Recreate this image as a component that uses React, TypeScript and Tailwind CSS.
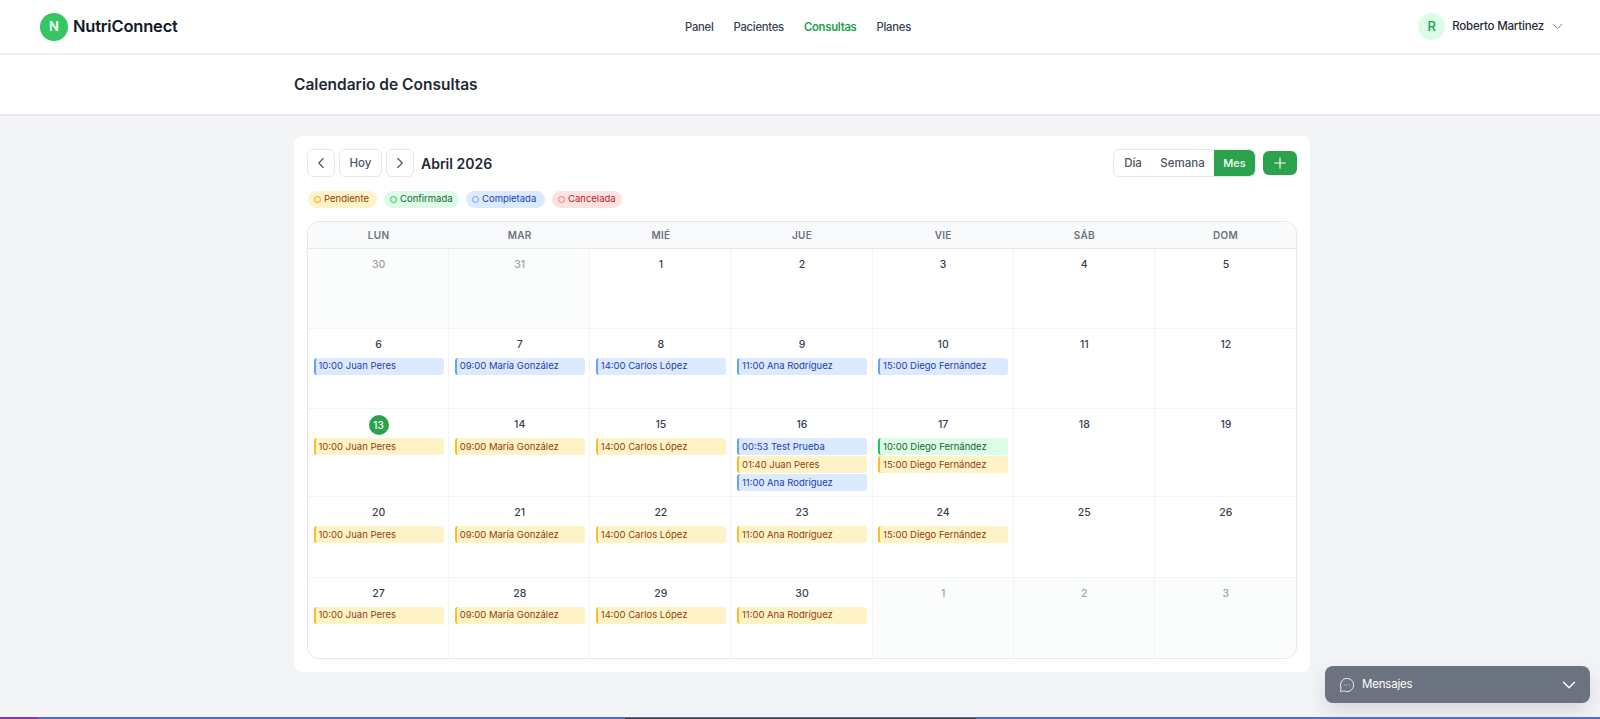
import React from 'react';
import { ChevronDown, ChevronLeft, ChevronRight, MessageCircleMore, Plus } from 'lucide-react';

type Status = 'p' | 'f' | 'c';
type Ev = { label: string; status: Status };

const evClass: Record<Status, string> = {
  p: 'bg-[#fef3c7] border-[#fbbf24] text-[#92400e]',
  f: 'bg-[#dcfce7] border-[#22c55e] text-[#166534]',
  c: 'bg-[#dbeafe] border-[#60a5fa] text-[#1e40af]',
};

const legend = [
  { label: 'Pendiente', box: 'w-[69px] bg-[#fef3c7] text-[#92400e]', dot: 'border-[#f59e0b]' },
  { label: 'Confirmada', box: 'w-[75px] bg-[#dcfce7] text-[#166534]', dot: 'border-[#22c55e]' },
  { label: 'Completada', box: 'w-[79px] bg-[#dbeafe] text-[#1e40af]', dot: 'border-[#60a5fa]' },
  { label: 'Cancelada', box: 'w-[70px] bg-[#fee2e2] text-[#b91c1c]', dot: 'border-[#f87171]' },
];

const juan = '10:00 Juan Peres';
const maria = '09:00 María González';
const carlos = '14:00 Carlos López';
const ana = '11:00 Ana Rodríguez';
const diego = '15:00 Diego Fernández';

const one = (label: string, status: Status): Ev[] => [{ label, status }];

const weeks: { day: number; muted?: boolean; today?: boolean; events?: Ev[] }[][] = [
  [
    { day: 30, muted: true },
    { day: 31, muted: true },
    { day: 1 },
    { day: 2 },
    { day: 3 },
    { day: 4 },
    { day: 5 },
  ],
  [
    { day: 6, events: one(juan, 'c') },
    { day: 7, events: one(maria, 'c') },
    { day: 8, events: one(carlos, 'c') },
    { day: 9, events: one(ana, 'c') },
    { day: 10, events: one(diego, 'c') },
    { day: 11 },
    { day: 12 },
  ],
  [
    { day: 13, today: true, events: one(juan, 'p') },
    { day: 14, events: one(maria, 'p') },
    { day: 15, events: one(carlos, 'p') },
    {
      day: 16,
      events: [
        { label: '00:53 Test Prueba', status: 'c' },
        { label: '01:40 Juan Peres', status: 'p' },
        { label: ana, status: 'c' },
      ],
    },
    {
      day: 17,
      events: [
        { label: '10:00 Diego Fernández', status: 'f' },
        { label: diego, status: 'p' },
      ],
    },
    { day: 18 },
    { day: 19 },
  ],
  [
    { day: 20, events: one(juan, 'p') },
    { day: 21, events: one(maria, 'p') },
    { day: 22, events: one(carlos, 'p') },
    { day: 23, events: one(ana, 'p') },
    { day: 24, events: one(diego, 'p') },
    { day: 25 },
    { day: 26 },
  ],
  [
    { day: 27, events: one(juan, 'p') },
    { day: 28, events: one(maria, 'p') },
    { day: 29, events: one(carlos, 'p') },
    { day: 30, events: one(ana, 'p') },
    { day: 1, muted: true },
    { day: 2, muted: true },
    { day: 3, muted: true },
  ],
];

const dayNames = ['LUN', 'MAR', 'MIÉ', 'JUE', 'VIE', 'SÁB', 'DOM'];

export default function App() {
  return (
    <div className="relative h-screen overflow-hidden bg-[#f3f4f6] font-['Inter',sans-serif] text-[#1f2937]">
      {/* Top nav */}
      <header className="relative flex h-[55px] items-center justify-between border-b-2 border-[#f0f1f5] bg-white pl-10 pr-[34px]">
        <div className="flex items-center gap-[5px]">
          <div className="flex h-[28px] w-[28px] items-center justify-center rounded-full bg-[#34c565] text-[13px] font-semibold text-white">N</div>
          <span className="text-[16.5px] font-semibold tracking-[-0.2px] text-[#111827]">NutriConnect</span>
        </div>
        <nav className="absolute left-[685px] top-0 flex h-[55px] items-center gap-[20px] text-[11.25px] font-medium tracking-[-0.25px] text-[#374151]">
          <a>Panel</a>
          <a>Pacientes</a>
          <a className="font-semibold text-[#16a34a]">Consultas</a>
          <a>Planes</a>
        </nav>
        <div className="flex items-center">
          <div className="flex h-[27px] w-[27px] items-center justify-center rounded-full bg-[#dcfce7] text-[13px] font-medium text-[#16a34a]">R</div>
          <span className="ml-[7px] text-[11.5px] font-medium tracking-[-0.2px] text-[#1f2937]">Roberto Martinez</span>
          <ChevronDown className="ml-[5px] h-[17px] w-[17px] text-[#6b7280]" strokeWidth={1.25} />
        </div>
      </header>

      {/* Page title */}
      <div className="flex h-[61px] items-center border-b-2 border-[#e5e7eb] bg-white pl-[294px] pt-[1px]">
        <h1 className="text-[15.5px] font-semibold text-[#1f2937]">Calendario de Consultas</h1>
      </div>

      {/* Calendar card */}
      <main className="ml-[294px] mt-5 w-[1016px] rounded-lg bg-white p-[13px]">
        <div className="flex items-start justify-between">
          <div className="flex items-center gap-1">
            <button className="flex h-[28px] w-[28px] items-center justify-center rounded-md border border-[#e5e7eb] bg-white text-[#4b5563]">
              <ChevronLeft className="h-[18px] w-[18px]" strokeWidth={1.5} />
            </button>
            <button className="h-[28px] w-[43px] rounded-md border border-[#e5e7eb] bg-white pt-[1px] text-[11.5px] font-medium text-[#4b5563]">Hoy</button>
            <button className="flex h-[28px] w-[28px] items-center justify-center rounded-md border border-[#e5e7eb] bg-white text-[#4b5563]">
              <ChevronRight className="h-[18px] w-[18px]" strokeWidth={1.5} />
            </button>
            <h2 className="ml-[3px] text-[14px] font-semibold text-[#1f2937]">Abril 2026</h2>
          </div>
          <div className="flex items-center gap-[7px]">
            <div className="flex h-[28px] w-[143px] items-center overflow-hidden rounded-md border border-[#e5e7eb] text-[11.5px] font-medium text-[#4b5563]">
              <span className="w-[37px] pl-[1px] pt-[1px] text-center">Día</span>
              <span className="w-[63px] pt-[1px] text-center">Semana</span>
              <span className="flex h-full flex-1 items-center justify-center rounded-r-md bg-[#2ba24c] pt-[1px] text-[11px] text-white">Mes</span>
            </div>
            <button className="flex h-[24px] w-[34px] items-center justify-center rounded-md bg-[#2ba24c] text-white">
              <Plus className="h-[18px] w-[18px]" strokeWidth={1.5} />
            </button>
          </div>
        </div>

        {/* Legend */}
        <div className="ml-[1px] mt-[14px] flex gap-[7px]">
          {legend.map((l) => (
            <div key={l.label} className={`flex h-[17px] items-center gap-[3px] rounded-full pl-[6px] text-[9.5px] ${l.box}`}>
              <span className={`h-[7px] w-[7px] rounded-full border ${l.dot}`} />
              {l.label}
            </div>
          ))}
        </div>

        {/* Month grid */}
        <div className="mt-[13px] overflow-hidden rounded-xl border border-[#e5e7eb]">
          <div className="grid h-[27px] grid-cols-7 items-center border-b border-[#e5e7eb] bg-[#f9fafb] text-center text-[10px] font-semibold tracking-[0.3px] text-[#6b7280]">
            {dayNames.map((d) => (
              <div key={d}>{d}</div>
            ))}
          </div>
          {weeks.map((week, i) => (
            <div key={i} className="grid grid-cols-7">
              {week.map((cell, j) => (
                <div
                  key={j}
                  className={`border-[#f3f4f6] pb-[5px] pl-[5.5px] pr-[4.5px] pt-[6px] ${i === 0 ? 'min-h-[79.5px]' : 'min-h-[80.5px]'} ${j < 6 ? 'border-r' : ''} ${i < 4 ? 'border-b' : ''} ${cell.muted ? 'bg-[#fbfcfc]' : 'bg-white'}`}
                >
                  <div className="flex h-[20px] items-center justify-center">
                    {cell.today ? (
                      <span className="flex h-[20px] w-[20px] items-center justify-center rounded-full bg-[#2ba24c] text-[10px] font-medium text-white">{cell.day}</span>
                    ) : (
                      <span className={`text-[10.5px] font-medium ${cell.muted ? 'text-[#9ca3af]' : 'text-[#374151]'}`}>{cell.day}</span>
                    )}
                  </div>
                  <div className="mt-[3px] flex flex-col gap-[1px]">
                    {cell.events?.map((ev) => (
                      <div key={ev.label} className={`flex h-[17px] items-center truncate rounded-[3px] border-l-2 pl-[3px] pt-[1px] text-[9.5px] font-normal ${evClass[ev.status]}`}>
                        {ev.label}
                      </div>
                    ))}
                  </div>
                </div>
              ))}
            </div>
          ))}
        </div>
      </main>

      {/* Messages widget */}
      <div className="absolute bottom-[16px] right-[10px] flex h-[37px] w-[265px] items-center justify-between rounded-lg bg-[#6b7280] pl-[14px] pr-[10px] text-white shadow-[0_8px_20px_rgba(0,0,0,0.12)]">
        <div className="flex items-center gap-[7px]">
          <MessageCircleMore className="h-[16px] w-[16px]" strokeWidth={1.25} />
          <span className="text-[11.5px] font-normal tracking-[-0.2px]">Mensajes</span>
        </div>
        <ChevronDown className="h-[22px] w-[22px]" strokeWidth={1.5} />
      </div>

      {/* Strip at the bottom edge */}
      <div className="absolute inset-x-0 bottom-0 flex h-[2px] items-end bg-[#5b6bc0]">
        <div className="h-[2px] w-[38px] bg-[#7e3fa8]" />
        <div className="ml-[587px] h-[1px] w-[351px] bg-[#3a3a3a]" />
      </div>
    </div>
  );
}
